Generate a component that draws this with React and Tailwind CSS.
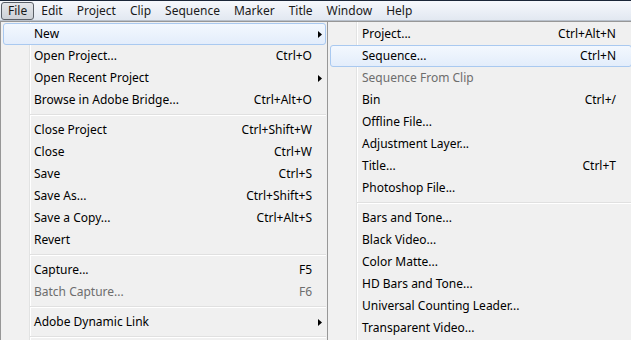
import React from 'react';

const menuBar = ['File', 'Edit', 'Project', 'Clip', 'Sequence', 'Marker', 'Title', 'Window', 'Help'];

const fileItems = [
  { label: 'New', sub: true, active: true },
  { label: 'Open Project...', key: 'Ctrl+O' },
  { label: 'Open Recent Project', sub: true },
  { label: 'Browse in Adobe Bridge...', key: 'Ctrl+Alt+O' },
  { sep: true },
  { label: 'Close Project', key: 'Ctrl+Shift+W' },
  { label: 'Close', key: 'Ctrl+W' },
  { label: 'Save', key: 'Ctrl+S' },
  { label: 'Save As...', key: 'Ctrl+Shift+S' },
  { label: 'Save a Copy...', key: 'Ctrl+Alt+S' },
  { label: 'Revert' },
  { sep: true },
  { label: 'Capture...', key: 'F5' },
  { label: 'Batch Capture...', key: 'F6', disabled: true },
  { sep: true },
  { label: 'Adobe Dynamic Link', sub: true },
  { sep: true },
];

const newItems = [
  { label: 'Project...', key: 'Ctrl+Alt+N' },
  { label: 'Sequence...', key: 'Ctrl+N', active: true },
  { label: 'Sequence From Clip', disabled: true },
  { label: 'Bin', key: 'Ctrl+/' },
  { label: 'Offline File...' },
  { label: 'Adjustment Layer...' },
  { label: 'Title...', key: 'Ctrl+T' },
  { label: 'Photoshop File...' },
  { sep: true },
  { label: 'Bars and Tone...' },
  { label: 'Black Video...' },
  { label: 'Color Matte...' },
  { label: 'HD Bars and Tone...' },
  { label: 'Universal Counting Leader...' },
  { label: 'Transparent Video...' },
];

function Arrow() {
  return (
    <svg width="4" height="7" viewBox="0 0 4 7" className="block">
      <path d="M0 0 L4 3.5 L0 7 Z" fill="#000" />
    </svg>
  );
}

function MenuList({ items, tail, indent }) {
  return (
    <div className="flex flex-col pt-px">
      {items.map((it, i) =>
        it.sep ? (
          <div key={i} className="h-[8px] flex flex-col justify-center pl-[29px]">
            <div className="h-px bg-[#e0e0e0]" />
            <div className="h-px bg-white" />
          </div>
        ) : (
          <div
            key={i}
            className={`h-[22px] ml-[2px] flex items-center ${indent} rounded-[3px] border ${
              it.active
                ? 'border-[#a9c9f0] bg-[linear-gradient(to_bottom,#f3f8fe,#e3edfb)]'
                : 'border-transparent'
            } ${it.disabled ? 'text-[#6d6d6d]' : 'text-black'}`}
          >
            <span className="flex-1 whitespace-nowrap">{it.label}</span>
            {it.key && <span className="whitespace-nowrap">{it.key}</span>}
            <span className={`${tail} flex items-center pl-[6px]`}>{it.sub && <Arrow />}</span>
          </div>
        )
      )}
    </div>
  );
}

export default function App() {
  return (
    <div className="w-[631px] h-[340px] overflow-hidden bg-[#f0f0f0] text-[12px] font-['Noto_Sans',sans-serif] leading-none">
      <div className="h-[21px] border-t border-[#1b2638] border-b border-b-[#b9c1cc] bg-[linear-gradient(to_bottom,#f6f8fc,#e2e8f1)] flex items-center">
        {menuBar.map((m, i) => (
          <div
            key={m}
            className={`h-[18px] px-[6px] flex items-center rounded-[3px] border ${
              i === 0
                ? 'border-[#5b6068] bg-[linear-gradient(to_bottom,#e4e6ea,#cdd1d7)] ml-px px-[4px]'
                : 'border-transparent'
            } text-[#1a1a1a]`}
          >
            {m}
          </div>
        ))}
      </div>
      <div className="flex h-[319px]">
        <div className="w-[327px] shrink-0 border-l border-t border-[#979797] bg-[linear-gradient(to_right,#f1f1f1_28px,#e2e3e3_28px,#e2e3e3_29px,#ffffff_29px,#ffffff_30px,#f0f0f0_30px)] pr-px">
          <MenuList items={fileItems} tail="w-[13px]" indent="pl-[30px]" />
        </div>
        <div className="w-[306px] shrink-0 border-l border-t border-[#979797] bg-[linear-gradient(to_right,#f1f1f1_28px,#e2e3e3_28px,#e2e3e3_29px,#ffffff_29px,#ffffff_30px,#f0f0f0_30px)] pr-px">
          <MenuList items={newItems} tail="w-[15px]" indent="pl-[31px]" />
        </div>
      </div>
    </div>
  );
}
